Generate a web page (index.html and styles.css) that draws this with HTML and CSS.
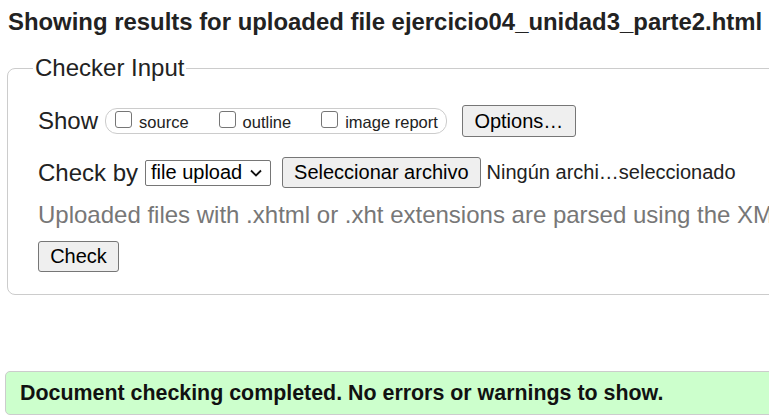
FILE: index.html
```html
<!DOCTYPE html>
<html>
<head>
<meta charset="utf-8">
<title>Nu Html Checker</title>
<link rel="stylesheet" href="styles.css">
</head>
<body>
<h2 class="title">Showing results for uploaded file ejercicio04_unidad3_parte2.html</h2>
<fieldset class="checker">
  <legend class="legend">Checker Input</legend>
  <div class="row row-show">
    <span class="label">Show</span>
    <div class="pill">
      <label class="opt"><span class="box"></span>source</label>
      <label class="opt"><span class="box"></span>outline</label>
      <label class="opt"><span class="box"></span>image report</label>
    </div>
    <button class="btn btn-options">Options…</button>
  </div>
  <div class="row row-by">
    <span class="label">Check by</span>
    <div class="select">
      <span>file upload</span>
      <svg class="chev" width="14" height="10" viewBox="0 0 14 10"><path d="M2 2.5 L7 7.5 L12 2.5" fill="none" stroke="#111" stroke-width="1.8"/></svg>
    </div>
    <button class="btn btn-file">Seleccionar archivo</button>
    <span class="nofile">Ningún archi…seleccionado</span>
  </div>
  <p class="hint">Uploaded files with .xhtml or .xht extensions are parsed using the XML parser.</p>
  <div class="row row-check">
    <button class="btn btn-check">Check</button>
  </div>
</fieldset>
<div class="success">Document checking completed. No errors or warnings to show.</div>
</body>
</html>
```

FILE: styles.css
```css
html {
  overflow: hidden;
}
body {
  margin: 0;
  padding: 0 0 0 8px;
  font-family: "Liberation Sans", Arial, sans-serif;
  color: #222;
  width: 1400px;
}
.title {
  margin: 0;
  padding-top: 8px;
  font-size: 23.9px;
  line-height: 28px;
  font-weight: bold;
  white-space: nowrap;
}
.checker {
  margin: 18px 0 0 -1px;
  width: 950px;
  border: 1px solid #ccc;
  border-radius: 8px;
  padding: 23px 0 22px 30px;
}
.legend {
  font-size: 24px;
  line-height: 28px;
  padding: 0 2px;
  margin-left: -5px;
}
.row {
  display: flex;
  align-items: center;
}
.label {
  font-size: 24px;
  line-height: 28px;
}
.row-show {
  height: 32px;
}
.pill {
  margin-left: 7px;
  height: 24px;
  border: 1px solid #ccc;
  border-radius: 12px;
  display: flex;
  align-items: center;
  padding: 0 8px 0 9px;
  gap: 30px;
}
.opt {
  display: flex;
  align-items: center;
  font-size: 16.5px;
  color: #222;
  gap: 7px;
  padding-top: 2px;
}
.box {
  width: 15px;
  height: 15px;
  border: 1px solid #767676;
  border-radius: 3px;
  margin-top: -6px;
  background: #fff;
}
.btn {
  font-family: "Liberation Sans", Arial, sans-serif;
  font-size: 20px;
  background: #efefef;
  border: 1px solid #767676;
  border-radius: 3px;
  color: #000;
  padding: 0 11px;
  white-space: nowrap;
}
.btn-options {
  margin-left: 15px;
  width: 114px;
  height: 32px;
}
.row-by {
  margin-top: 20px;
  height: 31px;
}
.select {
  margin-left: 7px;
  width: 126px;
  height: 26px;
  box-sizing: border-box;
  border: 1px solid #767676;
  border-radius: 2px;
  display: flex;
  align-items: center;
  justify-content: space-between;
  padding: 0 7px 0 5px;
  font-size: 20px;
  color: #000;
}
.chev {
  display: block;
}
.btn-file {
  margin-left: 11px;
  height: 31px;
}
.nofile {
  margin-left: 6px;
  font-size: 20px;
  color: #222;
  white-space: nowrap;
}
.hint {
  margin: 12px 0 0 0;
  font-size: 24px;
  line-height: 30px;
  color: #777;
  white-space: nowrap;
}
.row-check {
  margin-top: 11px;
}
.btn-check {
  width: 81px;
  height: 31px;
}
.success {
  margin: 76px 0 0 -3px;
  width: 950px;
  height: 44px;
  box-sizing: border-box;
  background: #ccffcc;
  border: 1px solid #ccc;
  border-radius: 5px;
  padding-left: 14px;
  display: flex;
  align-items: center;
  font-size: 21.4px;
  font-weight: bold;
  color: #111;
  white-space: nowrap;
}
```
